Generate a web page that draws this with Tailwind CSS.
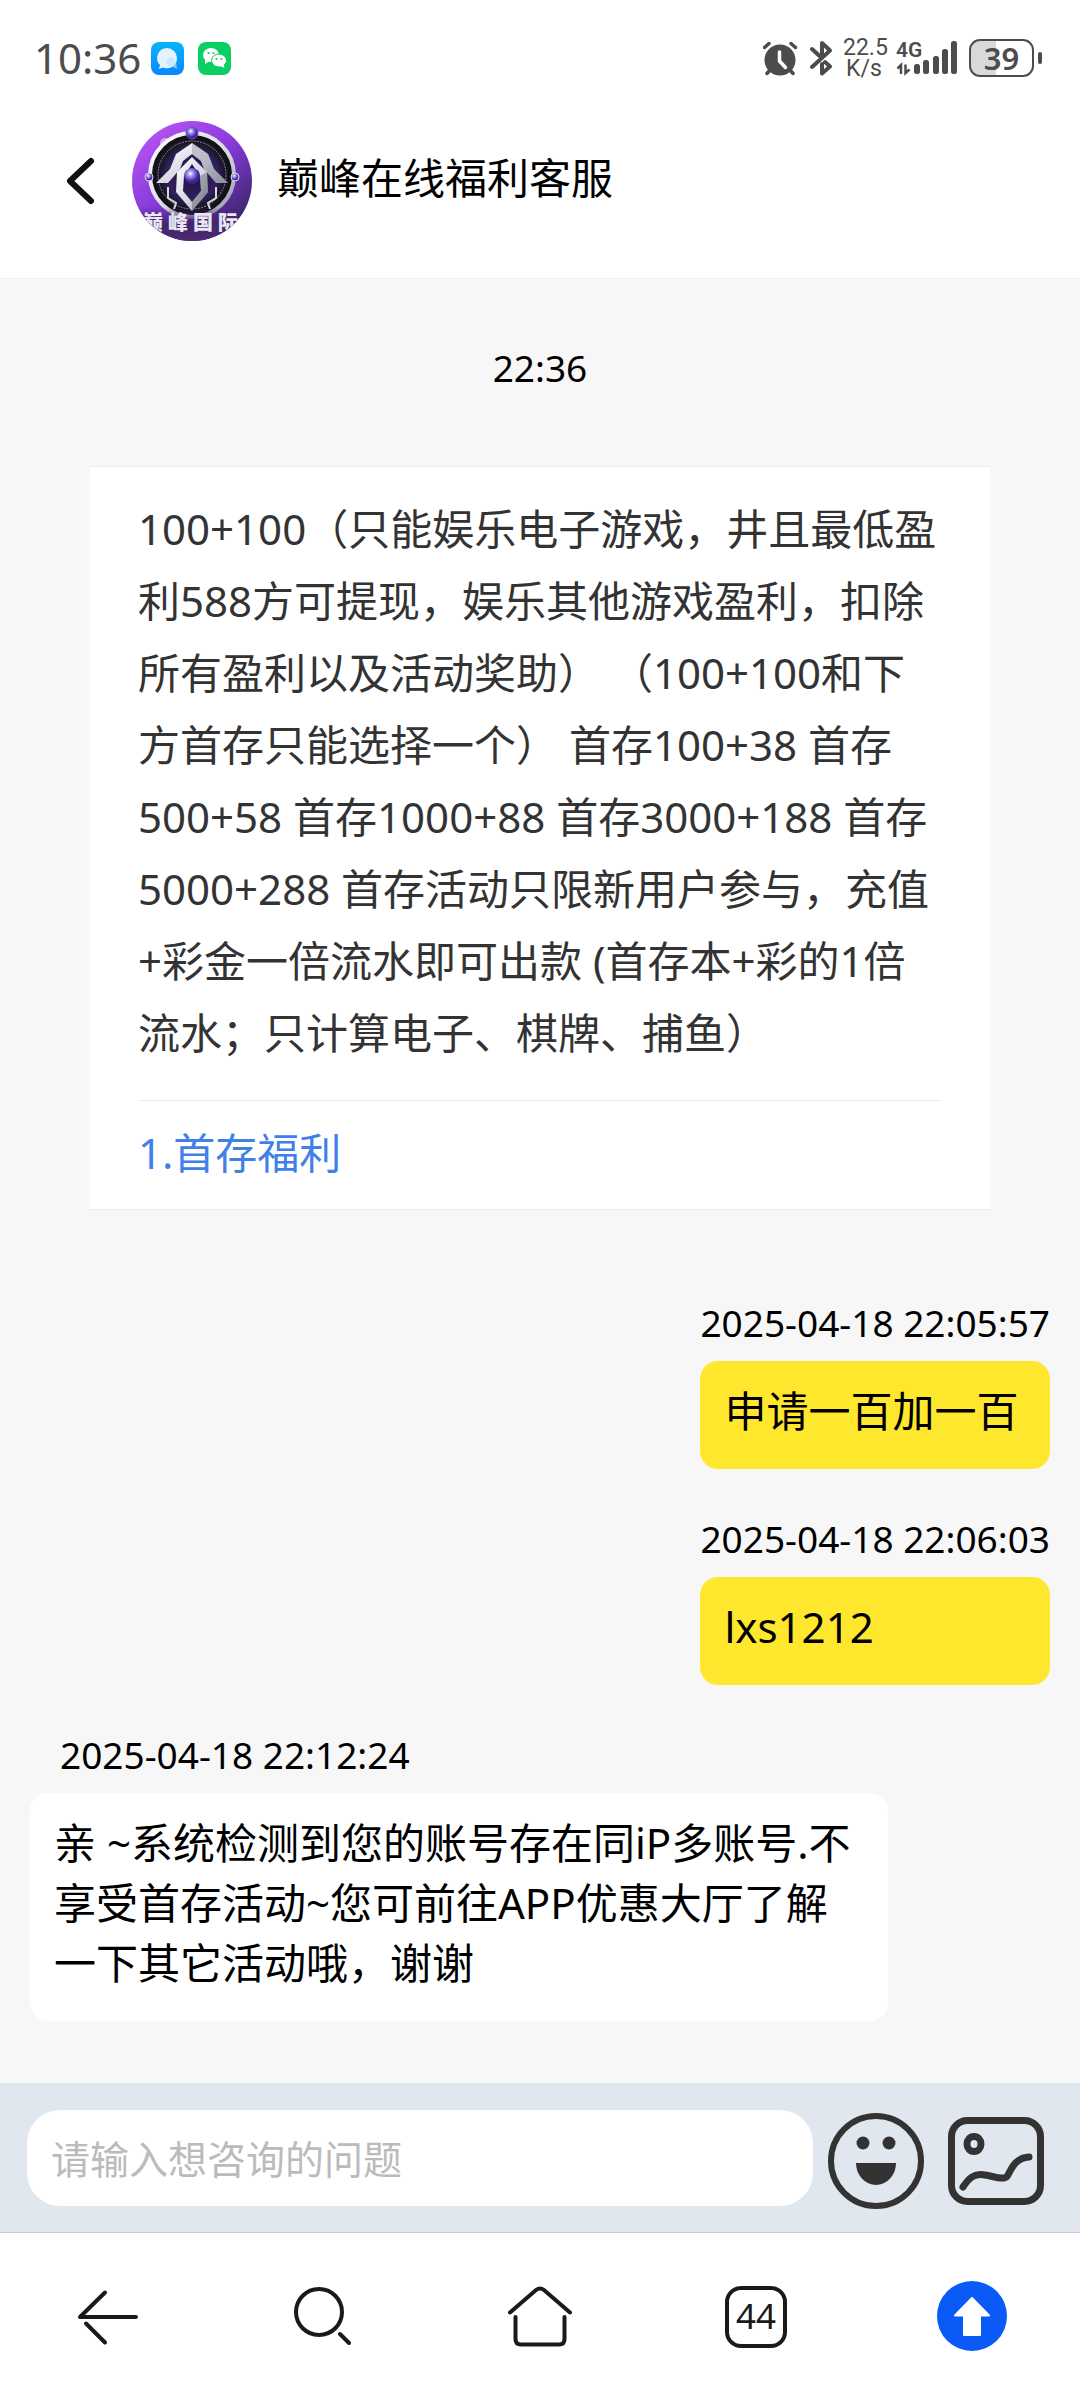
<!DOCTYPE html>
<html lang="zh-CN">
  <head>
    <meta charset="UTF-8" />
    <meta name="viewport" content="width=device-width, initial-scale=1.0" />
    <script src="https://cdn.jsdelivr.net/npm/@tailwindcss/browser@4"></script>
    <title>巅峰在线福利客服</title>
  </head>
  <body
    class="flex min-h-screen flex-col bg-white text-[42px] leading-[60px] text-black font-['Noto_Sans','Noto_Sans_CJK_SC',sans-serif]"
  >
    <!-- Status bar -->
    <div class="flex h-[84px] items-center justify-between pt-8 pr-[38px] pl-[34px] text-[#4c4c4c]">
      <div class="flex items-center gap-[14px]">
        <span class="mr-[-4px]">10:36</span>
        <svg class="size-[33px]" viewBox="0 0 33 33">
          <defs>
            <linearGradient id="msg" x1="0" y1="0" x2="0" y2="1">
              <stop offset="0" stop-color="#0ab4fb" />
              <stop offset="1" stop-color="#0787fd" />
            </linearGradient>
          </defs>
          <rect width="33" height="33" rx="8" fill="url(#msg)" />
          <path d="M20 24l6 3-1-7z" fill="#7cc8fd" />
          <path
            d="M16 6A10 10 0 0 1 26 16A10 10 0 0 1 12 25.500L8 27L9 23A10 10 0 0 1 16 6z"
            fill="#e3f4ff"
          />
          <circle cx="20" cy="20" r="4.500" fill="#b9e0ff" opacity=".6" />
        </svg>
        <svg class="size-[33px]" viewBox="0 0 33 33">
          <rect width="33" height="33" rx="8" fill="#0bcf63" />
          <ellipse cx="13" cy="13" rx="8" ry="7" fill="#fff" />
          <path d="M7 17l0 5 4-2.500z" fill="#fff" />
          <ellipse cx="21" cy="18.500" rx="7.500" ry="6.500" fill="#fff" stroke="#0bcf63" stroke-width="1" />
          <path d="M22 24l4.500 2-1-4z" fill="#fff" />
          <g fill="#0bcf63">
            <circle cx="10.500" cy="11" r="1.100" />
            <circle cx="15.500" cy="11" r="1.100" />
            <circle cx="18.500" cy="17" r="1" />
            <circle cx="23.500" cy="17" r="1" />
          </g>
        </svg>
      </div>
      <div class="flex items-center gap-[11px]">
        <svg class="h-9 w-9" viewBox="0 0 36 36" fill="none" stroke="#4c4c4c" stroke-linecap="round">
          <circle cx="17" cy="20" r="15.500" fill="#4c4c4c" stroke="none" />
          <path d="M1.500 7.500L6 3.500M28 3.500L32.500 7.500M7 30L4 33.500M27 30l3 3.500" stroke-width="3.500" />
          <path d="M16.500 12v9l6 6.500" stroke="#fff" stroke-width="3.500" />
        </svg>
        <svg
          class="h-9 w-[22px]"
          viewBox="0 0 22 36"
          fill="none"
          stroke="#4c4c4c"
          stroke-width="4"
          stroke-linecap="round"
          stroke-linejoin="round"
        >
          <path d="M2 9L9 15.500M2 27L20 10.500 12 3V15M15 22l5 4.500-8 7V24" />
        </svg>
        <div class="w-[42px] text-center text-[23px] leading-[21px] font-['Roboto',sans-serif]">
          <div>22.5</div>
          <div>K/s</div>
        </div>
        <div class="relative h-9">
          <svg class="h-9 w-[62px]" viewBox="0 0 62 36" fill="#4c4c4c">
            <path
              d="M5 34V25L1.500 28.500M9.500 24.500V33L13.500 29.500"
              fill="none"
              stroke="#4c4c4c"
              stroke-width="2.500"
            />
            <rect x="18" y="24" width="6" height="10" rx="2.500" />
            <rect x="27" y="20" width="6" height="14" rx="2.500" />
            <rect x="37" y="16" width="6" height="18" rx="2.500" />
            <rect x="46" y="9" width="6" height="25" rx="2.500" />
            <rect x="55" y="1" width="6" height="33" rx="2.500" />
          </svg>
          <span class="absolute -top-1 left-0 text-[21px] leading-7 font-semibold font-['Roboto',sans-serif]">4G</span>
        </div>
        <div class="relative h-[38px]">
          <svg class="h-[38px] w-[73px]" viewBox="0 0 73 38">
            <path d="M27 2H11a9 9 0 0 0-9 9v16a9 9 0 0 0 9 9h16z" fill="#d9d9d9" />
            <rect x="1" y="1" width="63" height="36" rx="10" fill="none" stroke="#4c4c4c" stroke-width="2" />
            <rect x="69" y="13" width="4" height="12" rx="2" fill="#4c4c4c" />
          </svg>
          <span class="absolute top-0 left-0 w-[65px] text-center text-[31px] leading-[38px] font-semibold">39</span>
        </div>
      </div>
    </div>

    <!-- Header -->
    <header class="flex h-[195px] items-center border-b border-[#f0f0f0] pl-[60px]">
      <button type="button" aria-label="返回" class="mr-[30px]">
        <svg
          class="h-[50px] w-[42px]"
          viewBox="0 0 42 50"
          fill="none"
          stroke="#111"
          stroke-width="6"
          stroke-linecap="round"
          stroke-linejoin="round"
        >
          <path d="M31 5L10 25l21 20" />
        </svg>
      </button>
      <svg class="mr-[25px] size-[120px]" viewBox="0 0 120 120">
        <defs>
          <linearGradient id="bg" x1="0" y1="0" x2=".8" y2="1">
            <stop offset="0" stop-color="#c05bf6" />
            <stop offset=".5" stop-color="#8a3bdc" />
            <stop offset="1" stop-color="#31235f" />
          </linearGradient>
          <linearGradient id="steel" x1="0" y1="0" x2="1" y2="1">
            <stop offset="0" stop-color="#fff" />
            <stop offset=".6" stop-color="#d3d6df" />
            <stop offset="1" stop-color="#8c90a2" />
          </linearGradient>
          <linearGradient id="shade" x1="0" y1="0" x2="0" y2="1">
            <stop offset="0" stop-color="#43256f" stop-opacity="0" />
            <stop offset=".5" stop-color="#43256f" />
            <stop offset="1" stop-color="#4b2a70" />
          </linearGradient>
          <radialGradient id="disc">
            <stop offset="0" stop-color="#1c1038" />
            <stop offset=".6" stop-color="#33205f" />
            <stop offset=".8" stop-color="#17151f" />
            <stop offset="1" stop-color="#0d0c12" />
          </radialGradient>
          <radialGradient id="gem" cx=".4" cy=".35">
            <stop offset="0" stop-color="#fff" />
            <stop offset=".4" stop-color="#9c8df2" />
            <stop offset="1" stop-color="#3c2299" />
          </radialGradient>
          <clipPath id="round"><circle cx="60" cy="60" r="60" /></clipPath>
        </defs>
        <g clip-path="url(#round)">
          <rect width="120" height="120" fill="url(#bg)" />
          <circle cx="33" cy="22" r="5" fill="#fff" opacity=".5" />
          <circle cx="60" cy="54" r="42" fill="url(#disc)" stroke="url(#steel)" stroke-width="4" />
          <circle cx="60" cy="54" r="34" fill="none" stroke="#8d86a8" stroke-width="1" stroke-dasharray="2 1" />
          <rect y="86" width="120" height="34" fill="url(#shade)" />
          <path d="M60 22L44 33 38 48 24 62h12L48 48 51 40 60 33 69 40 72 48 84 62H96L82 48 76 33z" fill="url(#steel)" />
          <path d="M60 22V33L69 40 72 48 84 62H96L82 48 76 33z" fill="#8a8d9c" opacity=".4" />
          <path
            d="M60 36L45 51l-1 20 16 19 16-19-1-20zM60 43l8 12 1 15-9 11-9-11 1-15z"
            fill="url(#steel)"
            fill-rule="evenodd"
          />
          <path d="M60 90l16-19-1-20-7 4 1 15-9 11z" fill="#5f6274" opacity=".45" />
          <path d="M36 66v11l8 5-2 6M84 66v11l-8 5 2 6" fill="none" stroke="#d5d7e0" stroke-width="2" />
          <circle cx="60" cy="55" r="8" fill="url(#gem)" />
          <circle cx="60" cy="12" r="6" fill="url(#gem)" stroke="#6a4ccc" stroke-width="1" />
          <circle cx="17" cy="56" r="4" fill="url(#gem)" stroke="#ddd" stroke-width="1" />
          <circle cx="103" cy="56" r="4" fill="url(#gem)" stroke="#ddd" stroke-width="1" />
          <text
            y="109"
            x="11 36 61 86"
            font-size="20"
            font-weight="900"
            font-family="Noto Sans CJK SC, sans-serif"
            fill="#e8e8f2"
          >巅峰国际</text>
        </g>
      </svg>
      <h1 class="pb-[6px]">巅峰在线福利客服</h1>
    </header>

    <!-- Conversation -->
    <main class="flex-1 bg-[#f7f7f7] pt-[59px] pb-[61px]">
      <div class="text-center text-[37px]">22:36</div>

      <section class="mx-[90px] mt-[68px] border-y border-[#eeeeee] bg-white px-12 pt-[26px] pb-[26px] text-[#333333]">
        <p class="leading-[72px]">
          100+100（只能娱乐电子游戏，井且最低盈利588方可提现，娱乐其他游戏盈利，扣除所有盈利以及活动奖助）
          （100+100和下方首存只能选择一个） 首存100+38 首存500+58 首存1000+88 首存3000+188
          首存5000+288 首存活动只限新用户参与，充值+彩金一倍流水即可出款
          (首存本+彩的1倍流水；只计算电子、棋牌、捕鱼）
        </p>
        <div class="mt-[31px] border-t border-[#eaeaea] pt-[22px]">
          <a href="#" class="block text-[#4080e8]">1.首存福利</a>
        </div>
      </section>

      <div class="mt-[83px] flex flex-col gap-10 px-[30px]">
        <div class="self-end">
          <div class="mb-2 text-[37px]">2025-04-18 22:05:57</div>
          <div class="rounded-[18px] bg-[#ffe72e] px-6 pt-5 pb-7">申请一百加一百</div>
        </div>
        <div class="self-end">
          <div class="mb-2 text-[37px]">2025-04-18 22:06:03</div>
          <div class="rounded-[18px] bg-[#ffe72e] px-6 pt-5 pb-7">lxs1212</div>
        </div>
        <div class="max-w-[858px] self-start">
          <div class="mb-2 pl-[30px] text-[37px]">2025-04-18 22:12:24</div>
          <div class="rounded-[18px] bg-white px-6 pt-5 pb-7">
            亲 ~系统检测到您的账号存在同iP多账号.不享受首存活动~您可前往APP优惠大厅了解一下其它活动哦，谢谢
          </div>
        </div>
      </div>
    </main>

    <!-- Message box -->
    <form class="flex items-center bg-[#e1e7ef] pt-6 pr-9 pb-[23px] pl-[27px]">
      <input
        class="h-24 min-w-0 flex-1 rounded-[33px] bg-white px-6 text-[39px] placeholder:text-[#bbbbbb]"
        type="text"
        name="message"
        aria-label="请输入想咨询的问题"
        placeholder="请输入想咨询的问题"
      />
      <button type="button" aria-label="表情" class="ml-[15px]">
        <svg class="h-[102px] w-24" viewBox="0 0 96 102" fill="#333">
          <circle cx="48" cy="54" r="45" fill="none" stroke="#333" stroke-width="6" />
          <circle cx="35" cy="36" r="6.500" />
          <circle cx="61" cy="36" r="6.500" />
          <path d="M28 56h40a20 22 0 0 1-40 0z" />
        </svg>
      </button>
      <button type="button" aria-label="图片" class="ml-6">
        <svg class="h-[102px] w-24" viewBox="0 0 96 102" fill="none" stroke="#333" stroke-linecap="round">
          <rect x="3.500" y="13.500" width="89" height="81" rx="16" stroke-width="7" />
          <ellipse cx="26" cy="37" rx="7" ry="7.500" stroke-width="7" />
          <path d="M15 80C21 71 26 66 37 68S56 73 59 69.500S65 51 81 50" stroke-width="7" />
        </svg>
      </button>
    </form>

    <!-- Browser toolbar -->
    <nav
      class="grid grid-cols-5 justify-items-center border-t border-[#c9cbcf] bg-white pt-12 pb-[47px] text-[#1a1a1a]"
    >
      <button type="button" aria-label="后退">
        <svg
          class="size-[72px]"
          viewBox="0 0 72 72"
          fill="none"
          stroke="currentColor"
          stroke-width="4"
          stroke-linecap="round"
          stroke-linejoin="round"
        >
          <path d="M33 11.500L8 36h56" />
          <path d="M14 42.500l19 19" />
        </svg>
      </button>
      <button type="button" aria-label="搜索">
        <svg
          class="size-[72px]"
          viewBox="0 0 72 72"
          fill="none"
          stroke="currentColor"
          stroke-width="4"
          stroke-linecap="round"
        >
          <circle cx="31" cy="31" r="23" />
          <path d="M52 53l9 9" />
        </svg>
      </button>
      <button type="button" aria-label="主页">
        <svg
          class="size-[72px]"
          viewBox="0 0 72 72"
          fill="none"
          stroke="currentColor"
          stroke-width="4"
          stroke-linecap="round"
        >
          <path d="M6 31.500L32 9q4-3 8 0l26 22.500" />
          <path d="M11.500 36v22q0 5.500 5.500 5.500h38q5.500 0 5.500-5.500V36" />
        </svg>
      </button>
      <button type="button" aria-label="标签页" class="flex size-[72px] items-center justify-center">
        <span
          class="flex size-[62px] items-center justify-center rounded-2xl border-4 border-[#1a1a1a] pb-1 text-[35px] leading-none"
          >44</span
        >
      </button>
      <button type="button" aria-label="回到顶部">
        <svg class="size-[72px]" viewBox="0 0 72 72">
          <circle cx="36" cy="35" r="35" fill="#0a5af8" />
          <path
            d="M36 17L53 34.500H44V54H28V34.500H19z"
            fill="#fff"
            stroke="#fff"
            stroke-width="2"
            stroke-linejoin="round"
          />
        </svg>
      </button>
    </nav>
  </body>
</html>
